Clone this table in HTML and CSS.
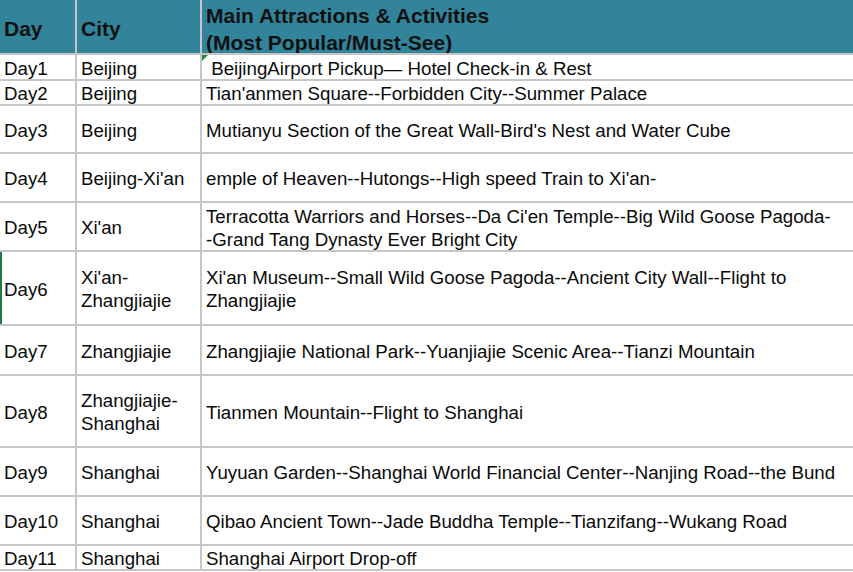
FILE: index.html
```html
<!DOCTYPE html>
<html>
<head>
<meta charset="utf-8">
<link rel="stylesheet" href="styles.css">
</head>
<body>
<div class="sheet">
  <div class="cell head">Day</div>
  <div class="cell head">City</div>
  <div class="cell head">Main Attractions &amp; Activities<br>(Most Popular/Must-See)</div>

  <div class="cell">Day1</div>
  <div class="cell">Beijing</div>
  <div class="cell flagged">&nbsp;BeijingAirport Pickup— Hotel Check-in &amp; Rest</div>

  <div class="cell">Day2</div>
  <div class="cell">Beijing</div>
  <div class="cell">Tian'anmen Square--Forbidden City--Summer Palace</div>

  <div class="cell">Day3</div>
  <div class="cell">Beijing</div>
  <div class="cell">Mutianyu Section of the Great Wall-Bird's Nest and Water Cube</div>

  <div class="cell">Day4</div>
  <div class="cell">Beijing-Xi'an</div>
  <div class="cell">emple of Heaven--Hutongs--High speed Train to Xi'an-</div>

  <div class="cell">Day5</div>
  <div class="cell">Xi'an</div>
  <div class="cell">Terracotta Warriors and Horses--Da Ci'en Temple--Big Wild Goose Pagoda-<br>-Grand Tang Dynasty Ever Bright City</div>

  <div class="cell selected">Day6</div>
  <div class="cell">Xi'an-<br>Zhangjiajie</div>
  <div class="cell">Xi'an Museum--Small Wild Goose Pagoda--Ancient City Wall--Flight to<br>Zhangjiajie</div>

  <div class="cell">Day7</div>
  <div class="cell">Zhangjiajie</div>
  <div class="cell">Zhangjiajie National Park--Yuanjiajie Scenic Area--Tianzi Mountain</div>

  <div class="cell">Day8</div>
  <div class="cell">Zhangjiajie-<br>Shanghai</div>
  <div class="cell">Tianmen Mountain--Flight to Shanghai</div>

  <div class="cell">Day9</div>
  <div class="cell">Shanghai</div>
  <div class="cell">Yuyuan Garden--Shanghai World Financial Center--Nanjing Road--the Bund</div>

  <div class="cell">Day10</div>
  <div class="cell">Shanghai</div>
  <div class="cell">Qibao Ancient Town--Jade Buddha Temple--Tianzifang--Wukang Road</div>

  <div class="cell">Day11</div>
  <div class="cell">Shanghai</div>
  <div class="cell">Shanghai Airport Drop-off</div>
</div>
</body>
</html>
```
FILE: styles.css
```css
html, body {
  margin: 0;
  padding: 0;
  background: #ffffff;
}

body {
  font-family: "Liberation Sans", Arial, sans-serif;
  color: #000000;
}

.sheet {
  display: grid;
  grid-template-columns: 75px 123px 1fr;
  grid-template-rows: 53px 24px 23px 46px 47px 47px 72px 48px 70px 47px 47px 23px;
  column-gap: 2px;
  row-gap: 2px;
  background: #c6c6c6;
  border-bottom: 2px solid #c6c6c6;
  width: 853px;
}

.cell {
  background: #ffffff;
  display: flex;
  align-items: center;
  padding: 2px 4px 0 4px;
  font-size: 18.7px;
  line-height: 23px;
  white-space: nowrap;
  overflow: hidden;
  position: relative;
  color: #0a0a0a;
}

.head {
  background: #31849a;
  font-weight: bold;
  font-size: 21px;
  line-height: 27px;
  color: #111111;
  padding: 4px 4px 0 4px;
}

.flagged::before {
  content: "";
  position: absolute;
  left: 0;
  top: 0;
  border-top: 6px solid #1e8a3c;
  border-right: 6px solid transparent;
}

.selected {
  box-shadow: inset 2px 0 0 #1f7a45;
}
```
